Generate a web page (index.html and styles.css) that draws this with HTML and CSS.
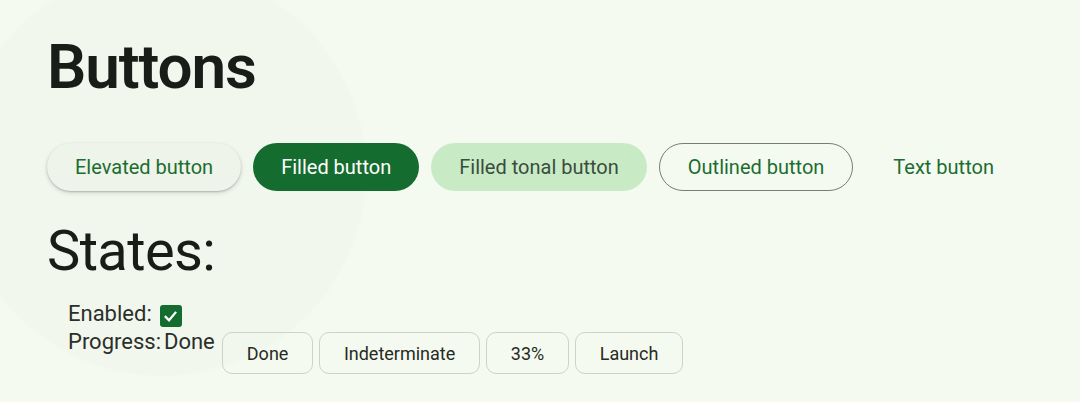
FILE: index.html
```html
<!DOCTYPE html>
<html>
<head>
<meta charset="utf-8">
<link rel="stylesheet" href="styles.css">
</head>
<body>
<main class="page">
  <h1 class="title">Buttons</h1>
  <div class="btn-row">
    <button class="btn elevated">Elevated button</button>
    <button class="btn filled">Filled button</button>
    <button class="btn tonal">Filled tonal button</button>
    <button class="btn outlined">Outlined button</button>
    <button class="btn text">Text button</button>
  </div>
  <h2 class="states-title">States:</h2>
  <div class="states">
    <div class="state-line">
      <span class="label">Enabled:</span>
      <span class="checkbox">
        <svg viewBox="0 0 20 20" width="15" height="15"><path d="M3.5 10.5 L8 15 L16.5 5" fill="none" stroke="#fff" stroke-width="3" stroke-linecap="square"/></svg>
      </span>
    </div>
    <div class="state-line progress">
      <span class="label">Progress:</span>
      <span class="value">Done</span>
      <div class="chips">
        <button class="chip">Done</button>
        <button class="chip">Indeterminate</button>
        <button class="chip">33%</button>
        <button class="chip">Launch</button>
      </div>
    </div>
  </div>
</main>
</body>
</html>
```

FILE: styles.css
```css
html, body {
  margin: 0;
  padding: 0;
}
body {
  width: 1080px;
  height: 402px;
  overflow: hidden;
  font-family: Roboto, "Liberation Sans", sans-serif;
  color: #181d17;
  background:
    radial-gradient(circle at 162px 172px, #f2f7ee 0, #f2f7ee 202px, rgba(0,0,0,0) 206px),
    #f5faf0;
}
.page {
  padding: 30px 0 0 47px;
}
.title {
  margin: 0;
  font-size: 62px;
  font-weight: 600;
  line-height: 74px;
  letter-spacing: -1.1px;
}
.btn-row {
  display: flex;
  gap: 12px;
  margin-top: 39px;
}
.btn {
  height: 48px;
  padding: 0 28px;
  border-radius: 24px;
  border: none;
  font-family: Roboto, "Liberation Sans", sans-serif;
  font-size: 20px;
  font-weight: 400;
  letter-spacing: 0;
  background: transparent;
  color: #1b6d30;
}
.elevated {
  background: #eff4ea;
  box-shadow: 0 1px 2px rgba(0,0,0,0.22), 0 2px 4px 1px rgba(0,0,0,0.08);
}
.filled {
  background: #146c2e;
  color: #ffffff;
}
.tonal {
  background: #c8ebc6;
  color: #3b4c3c;
}
.outlined {
  border: 1px solid #767d73;
}
.states-title {
  margin: 27px 0 0;
  font-size: 56px;
  font-weight: 400;
  line-height: 66px;
  letter-spacing: -0.6px;
}
.states {
  padding-left: 21px;
  margin-top: 16px;
}
.state-line {
  display: flex;
  align-items: center;
  font-size: 22px;
  line-height: 28px;
  color: #2b2f2a;
}
.checkbox {
  width: 22px;
  height: 22px;
  margin-left: 8px;
  margin-top: 4px;
  border-radius: 3px;
  background: #146c2e;
  display: flex;
  align-items: center;
  justify-content: center;
}
.progress {
  align-items: flex-start;
}
.value {
  margin-left: 3px;
}
.chips {
  display: flex;
  gap: 5.5px;
  margin-left: 7px;
  margin-top: 4px;
}
.chip {
  height: 42px;
  padding: 0 24px;
  border: 1px solid #cdd3c9;
  border-radius: 10px;
  background: transparent;
  font-family: Roboto, "Liberation Sans", sans-serif;
  font-size: 18px;
  color: #262a25;
}
```
